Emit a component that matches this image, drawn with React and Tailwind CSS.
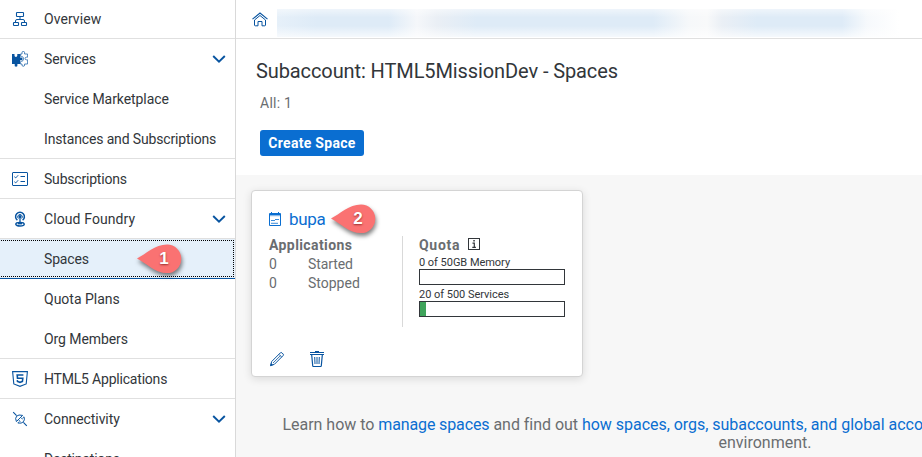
import React from "react";

const svgProps = { fill: "none", stroke: "#0854a0", strokeWidth: 1 };

const OverviewIcon = () => (
  <svg width="16" height="16" viewBox="0 0 16 16" {...svgProps}>
    <rect x="4.5" y="1.5" width="7" height="4" rx="0.6" strokeWidth="1.1" />
    <rect x="1.5" y="11.5" width="5" height="3" rx="0.6" strokeWidth="1.1" />
    <rect x="9.5" y="11.5" width="5" height="3" rx="0.6" strokeWidth="1.1" />
    <path d="M8 6v2.5M3.5 11.5v-1.5q0-1.5 1.5-1.5h6q1.5 0 1.5 1.5v1.5" />
  </svg>
);

const ServicesIcon = () => (
  <svg width="16" height="16" viewBox="0 0 16 16" {...svgProps}>
    <path fill="#0854a0" stroke="none" d="M0 3h2.5v1.6a1.4 1.4 0 0 0 2.8 0V3H8v3.6h1.2a1.3 1.3 0 0 1 0 2.7H8V13H5.4v1a1.4 1.4 0 1 1-2.7 0v-1H0z" />
    <path strokeWidth="0.7" d="M8.4 3H10V1.7a1.3 1.3 0 0 1 2.6 0V3h3v3.2h-1.2a1.3 1.3 0 0 0 0 2.6h1.2V13h-3v1a1.3 1.3 0 0 1-2.6 0v-1H8.4v-2.4M8.5 3v2.4h1.3q1.8.3 1.7 2.5t-1.7 2.4H8.5" />
  </svg>
);

const ChecklistIcon = () => (
  <svg width="16" height="14" viewBox="0 0 16 14" {...svgProps}>
    <rect x="0.5" y="0.5" width="15" height="13" rx="0.5" />
    <path d="M8.5 4.5h4.5M8.5 9.5h4.5" />
    <path strokeWidth="0.9" d="M2.3 4.7l1.5 1.2 2.4-2.7M2.3 9.7l1.5 1.2 2.4-2.7" />
  </svg>
);

const CloudFoundryIcon = () => (
  <svg width="16" height="16" viewBox="0 0 16 16" {...svgProps}>
    <path strokeWidth="1.5" d="M5.4 9.2a4.4 4.4 0 1 1 5.2 0" />
    <path strokeWidth="1" d="M6.4 7.5a2.3 2.3 0 1 1 3.2 0" />
    <circle cx="8" cy="5.5" r="1.5" fill="#0854a0" stroke="none" />
    <path strokeWidth="1.3" d="M8 6v6" />
    <ellipse cx="8" cy="13.3" rx="4.2" ry="1.7" strokeWidth="1.5" />
    <path strokeWidth="1.4" d="M6 12.7h4" />
  </svg>
);

const Html5Icon = () => (
  <svg width="16" height="16" viewBox="0 0 16 16" {...svgProps}>
    <path strokeWidth="1.1" d="M0.6 0.6h14.8l-1.2 12.3L8 15.3l-6.2-2.4z" />
    <path strokeWidth="1.6" d="M11.4 4H5.2l.3 3.2h5.3l-.4 3.3L8 11.3l-2.5-.8-.2-1.3" />
  </svg>
);

const ConnectivityIcon = () => (
  <svg width="16" height="16" viewBox="0 0 16 16" {...svgProps}>
    <path d="M1.2 1.2l3.4 3.4M11.4 11.4l3.4 3.4" strokeWidth="1.1" />
    <path d="M10.6 4.4L4.4 10.6Q2.8 7.2 4.6 5.2T10.6 4.4z" />
    <path d="M12 5.8Q13.2 8.8 11.4 10.8T5.8 12" />
    <path d="M5.8 12L7.4 10.4M12 5.8L10.4 7.4M6.4 8.6l2 2M8.6 6.4l2 2" strokeWidth="0.8" />
  </svg>
);

const Chevron = () => (
  <svg className="mr-[9px]" width="14" height="8" viewBox="0 0 14 8" fill="none" stroke="#0854a0" strokeWidth="1.9">
    <path d="M1.2 1L7 6.6 12.8 1" />
  </svg>
);

const HomeIcon = () => (
  <svg width="16" height="15" viewBox="0 0 16 15" {...svgProps}>
    <path strokeWidth="1.1" d="M.5 7.2L8 1l7.5 6.2" />
    <path d="M2.5 8V13q0 .8.8.8H6V9.5h4v4.3h2.7q.8 0 .8-.8V8L8 3.5z" />
  </svg>
);

const SpaceIcon = () => (
  <svg width="12" height="14" viewBox="0 0 12 14" fill="none" stroke="#0a6ed1">
    <path d="M.5 1.5h11v12H.5z" />
    <path d="M.5 2.5h11M2.5 0v2M9.5 0v2" />
    <path d="M.5 3.7h11" strokeWidth="0.6" />
    <path d="M6 7.5h4M2 8.5h4M2 11.3h7" strokeWidth="0.8" />
  </svg>
);

const PencilIcon = () => (
  <svg width="16" height="16" viewBox="0 0 16 16" {...svgProps}>
    <path d="M1.5 14.7l1.2-4.2 8.7-8.7q.8-.6 1.6.1l1.1 1.1q.8.8 0 1.6L5.4 13.3z" />
    <path d="M10 3.4l2.7 2.7M4 12L11.6 4.5" strokeWidth="0.8" />
    <path d="M1.2 15l.8-3 2.2 2z" fill="#0854a0" stroke="none" />
  </svg>
);

const TrashIcon = () => (
  <svg width="14" height="16" viewBox="0 0 14 16" {...svgProps}>
    <path d="M0 1.5h14M0 3.5h14M5 .5h4" />
    <path d="M1.7 4l1 10.7q.1.8.8.8h7q.7 0 .8-.8L12.3 4" strokeWidth="1.2" />
    <path d="M4.7 6l.3 7M7 6v7M9.3 6L9 13" />
  </svg>
);

const InfoIcon = () => (
  <svg width="12" height="12" viewBox="0 0 12 12" fill="none" stroke="#32363a">
    <rect x=".5" y=".5" width="11" height="11" />
    <path d="M4.5 5.1H6.3V9M4.3 9.4h3.6" strokeWidth="1.2" />
    <path d="M5.3 2.8h1.5" strokeWidth="1.4" />
  </svg>
);

function Marker({ n, className }) {
  return (
    <div className={"absolute h-[30px] w-[46px] " + className}>
      <svg className="overflow-visible [filter:drop-shadow(1px_3px_2px_rgba(0,0,0,0.5))]" width="46" height="30" viewBox="0 0 46 30">
        <path fill="#fa7272" d="M0 14.5C9 10 18 .5 30 .5a14.3 14.3 0 1 1 0 28.6C18 29.1 9 19 0 14.5z" />
      </svg>
      <span className="absolute top-[3px] left-[21px] w-3 text-center font-['Liberation_Sans',sans-serif] text-[17px]/[24px] font-bold text-white [text-shadow:0_1px_2px_rgba(90,0,0,0.6)]">{n}</span>
    </div>
  );
}

const items = [
  { label: "Overview", icon: OverviewIcon, line: true, track: "tracking-[0.06px]" },
  { label: "Services", icon: ServicesIcon, open: true, track: "tracking-[-0.1px]" },
  { label: "Service Marketplace", track: "tracking-[-0.07px]" },
  { label: "Instances and Subscriptions", line: true, track: "tracking-[-0.15px]" },
  { label: "Subscriptions", icon: ChecklistIcon, line: true, track: "tracking-[-0.2px]" },
  { label: "Cloud Foundry", icon: CloudFoundryIcon, open: true, line: true, track: "tracking-[0.1px]" },
  { label: "Spaces", selected: true, track: "tracking-[-0.15px]" },
  { label: "Quota Plans", track: "tracking-[0px]" },
  { label: "Org Members", line: true, track: "tracking-[-0.08px]" },
  { label: "HTML5 Applications", icon: Html5Icon, line: true, track: "tracking-[-0.2px]" },
  { label: "Connectivity", icon: ConnectivityIcon, open: true, track: "tracking-[-0.08px]" },
  { label: "Destinations", track: "tracking-[-0.2px]" },
];

function NavItem({ label, icon: Icon, open, line, selected, track }) {
  const edge = selected ? "border-[#0854a0] bg-[#e5f0fa]" : line ? "border-[#e0e0e0]" : "border-transparent";
  return (
    <li className={"relative flex h-10 shrink-0 items-center border-b " + edge}>
      {selected && <span className="absolute top-[1px] right-[1px] bottom-[1px] -left-px border border-dotted border-black" />}
      <span className="flex w-10 justify-center">{Icon && <Icon />}</span>
      <span className={"ml-1 flex-1 text-sm whitespace-nowrap text-[#32363a] " + track}>{label}</span>
      {open && <Chevron />}
    </li>
  );
}

function Meter({ label, fill }) {
  return (
    <div className="h-8">
      <div className="h-[14px] pt-px text-[11px]/[13px] tracking-[-0.03px] whitespace-nowrap text-[#32363a]">{label}</div>
      <div className="h-4 w-[146px] border border-[#32363a] bg-white">
        {fill && <div className="h-full w-[6px] bg-[#3fa45b]" />}
      </div>
    </div>
  );
}

export default function App() {
  return (
    <div className="relative flex h-[457px] w-[922px] overflow-hidden bg-white font-[Roboto,'Noto_Sans',sans-serif]">
      <nav className="h-full w-[236px] shrink-0 overflow-hidden border-r border-[#d9d9d9]">
        <ul className="-mt-px flex flex-col">
          {items.map((item) => <NavItem key={item.label} {...item} />)}
        </ul>
      </nav>

      <main className="flex min-w-0 flex-1 flex-col">
        <header className="flex h-[39px] shrink-0 items-start border-b border-[#e0e0e0] pl-4">
          <span className="mt-[12px]"><HomeIcon /></span>
          <div className="mt-[9px] ml-[9px] h-7 w-[626px] bg-[linear-gradient(180deg,rgba(255,255,255,0.5)_0%,transparent_30%,transparent_60%,rgba(255,255,255,0.7)_100%),linear-gradient(90deg,#e6f0f9_0,#deebf7_40px,#deebf7_112px,#f5f7fa_140px,#eaeff5_160px,#deebf7_200px,#deebf7_376px,#f6f8fa_412px,#f8f9fa_430px,#eaeff5_445px,#deebf7_480px,#deebf7_565px,#f6f9fc_590px,#ffffff_622px)]" />
        </header>

        <section className="flex h-[136px] shrink-0 flex-col items-start">
          <h1 className="mt-5 ml-5 text-xl/[24px] tracking-[-0.1px] whitespace-nowrap text-[#32363a]">Subaccount: HTML5MissionDev - Spaces</h1>
          <p className="mt-[11px] ml-6 text-sm/[18px] tracking-[0.25px] text-[#6a6d70]">All: 1</p>
          <button className="mt-[18px] ml-6 h-[26px] w-[104px] rounded-[3px] bg-[#0a6ed1] text-sm/[26px] font-bold tracking-[0.3px] whitespace-nowrap text-white">Create Space</button>
        </section>

        <section className="flex flex-1 flex-col bg-[#f7f7f7] pt-[15px]">
          <article className="ml-[15px] flex h-[187px] w-[332px] shrink-0 flex-col rounded border border-[#d4d4d4] bg-white shadow-[0_2px_8px_rgba(0,0,0,0.12)]">
            <div className="mt-[16px] ml-[17px] flex h-6 items-center">
              <SpaceIcon />
              <a className="ml-2 text-[17px]/[24px] tracking-[-0.35px] text-[#0a6ed1]">bupa</a>
            </div>
            <div className="mt-[5px] ml-[17px] flex h-[91px]">
              <div className="w-[134px] border-r border-[#d9d9d9] text-sm/[19px] text-[#6a6d70]">
                <h2 className="font-bold tracking-[0.4px]">Applications</h2>
                <div className="flex"><span className="w-[39px]">0</span><span className="tracking-[-0.1px]">Started</span></div>
                <div className="flex"><span className="w-[39px]">0</span><span>Stopped</span></div>
              </div>
              <div className="ml-4">
                <h2 className="flex h-[19px] items-center text-sm/[19px] font-bold tracking-[0.7px] text-[#6a6d70]">
                  <span className="w-[49px]">Quota</span>
                  <span className="-mt-[3px]"><InfoIcon /></span>
                </h2>
                <Meter label="0 of 50GB Memory" />
                <Meter label="20 of 500 Services" fill />
              </div>
            </div>
            <div className="mt-[24px] ml-[17px] flex items-center gap-[25px]">
              <PencilIcon />
              <TrashIcon />
            </div>
          </article>
          <p className="mt-[39px] ml-[46.5px] w-[965px] text-center text-base/[18px] whitespace-nowrap text-[#6a6d70]">
            <span className="block text-left tracking-[-0.03px]">Learn how to <a className="tracking-[-0.12px] text-[#0a6ed1]">manage spaces</a> and find out <a className="text-[#0a6ed1]">how spaces, orgs, subaccounts, and global accounts relate to each other</a></span>
            <span className="block">environment.</span>
          </p>
        </section>
      </main>

      <Marker n="1" className="top-[244px] left-[137px]" />
      <Marker n="2" className="top-[204px] left-[331px]" />
    </div>
  );
}
